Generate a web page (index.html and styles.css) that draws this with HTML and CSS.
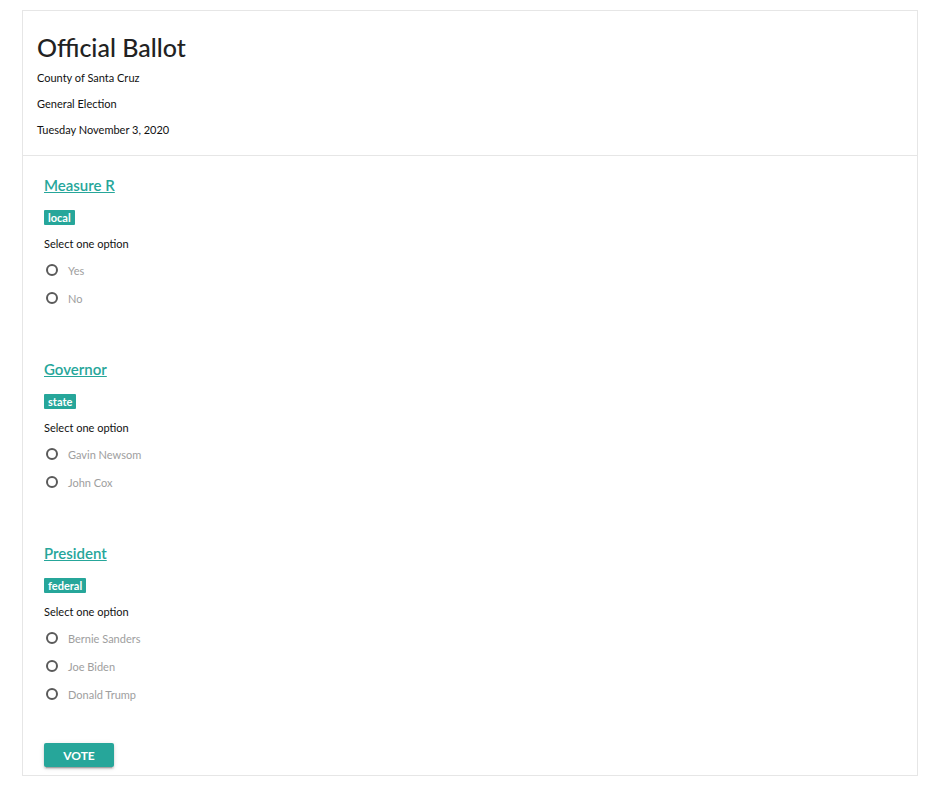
FILE: index.html
```html
<!DOCTYPE html>
<html>
<head>
<meta charset="utf-8">
<link rel="stylesheet" href="styles.css">
</head>
<body>
<div class="ballot">
  <header class="ballot-head">
    <h1 class="title">Official Ballot</h1>
    <p class="meta">County of Santa Cruz</p>
    <p class="meta">General Election</p>
    <p class="meta">Tuesday November 3, 2020</p>
  </header>
  <form class="ballot-body">
    <section class="contest">
      <a class="contest-title" href="#">Measure R</a>
      <div><span class="tag">local</span></div>
      <p class="instr">Select one option</p>
      <label class="option"><span class="radio"></span><span class="opt-label">Yes</span></label>
      <label class="option"><span class="radio"></span><span class="opt-label">No</span></label>
    </section>
    <section class="contest">
      <a class="contest-title" href="#">Governor</a>
      <div><span class="tag">state</span></div>
      <p class="instr">Select one option</p>
      <label class="option"><span class="radio"></span><span class="opt-label">Gavin Newsom</span></label>
      <label class="option"><span class="radio"></span><span class="opt-label">John Cox</span></label>
    </section>
    <section class="contest">
      <a class="contest-title" href="#">President</a>
      <div><span class="tag">federal</span></div>
      <p class="instr">Select one option</p>
      <label class="option"><span class="radio"></span><span class="opt-label">Bernie Sanders</span></label>
      <label class="option"><span class="radio"></span><span class="opt-label">Joe Biden</span></label>
      <label class="option"><span class="radio"></span><span class="opt-label">Donald Trump</span></label>
    </section>
    <div class="actions"><button type="button" class="vote">VOTE</button></div>
  </form>
</div>
</body>
</html>
```
FILE: styles.css
```css
* { box-sizing: border-box; }
html, body { background: #fff; }
body {
  margin: 0;
  font-family: Lato, "Noto Sans", sans-serif;
  color: #222;
}
.ballot {
  margin: 10px 26px 0 22px;
  width: 896px;
  border: 1px solid #e6e6e6;
}
.ballot-head {
  padding: 22px 15px 12px 14px;
  border-bottom: 1px solid #e6e6e6;
}
.title {
  margin: 0 0 4px;
  font-size: 25px;
  line-height: 28px;
  font-weight: 500;
  color: #222;
}
.meta {
  margin: 0;
  font-size: 11px;
  line-height: 26px;
  color: #111;
}
.ballot-body {
  padding: 19px 22px 8px 21px;
}
.contest {
  padding-bottom: 47px;
}
.contest:last-of-type { padding-bottom: 35px; }
.contest-title {
  display: inline-block;
  font-size: 15px;
  line-height: 20px;
  color: #26a69a;
  text-decoration: underline;
  font-weight: 600;
}
.tag {
  display: inline-block;
  margin-top: 15px;
  background: #26a69a;
  color: #fff;
  font-size: 11px;
  line-height: 15px;
  font-weight: 700;
  padding: 0 4px;
  border-radius: 1px;
}
.instr {
  margin: 11px 0 4px;
  font-size: 11px;
  line-height: 16px;
  color: #111;
}
.option {
  display: flex;
  align-items: center;
  height: 28px;
  padding-left: 2px;
}
.radio {
  width: 12px;
  height: 12px;
  border: 2px solid #5a5a5a;
  border-radius: 50%;
  margin-right: 10px;
}
.opt-label {
  font-size: 11px;
  color: #9e9e9e;
}
.vote {
  display: block;
  width: 70px;
  height: 24px;
  border: none;
  border-radius: 2px;
  background: #26a69a;
  color: #fff;
  font-family: inherit;
  font-size: 12px;
  font-weight: 700;
  box-shadow: 0 2px 2px 0 rgba(0,0,0,0.14), 0 1px 5px 0 rgba(0,0,0,0.12), 0 3px 1px -2px rgba(0,0,0,0.2);
  padding: 0;
}
```
